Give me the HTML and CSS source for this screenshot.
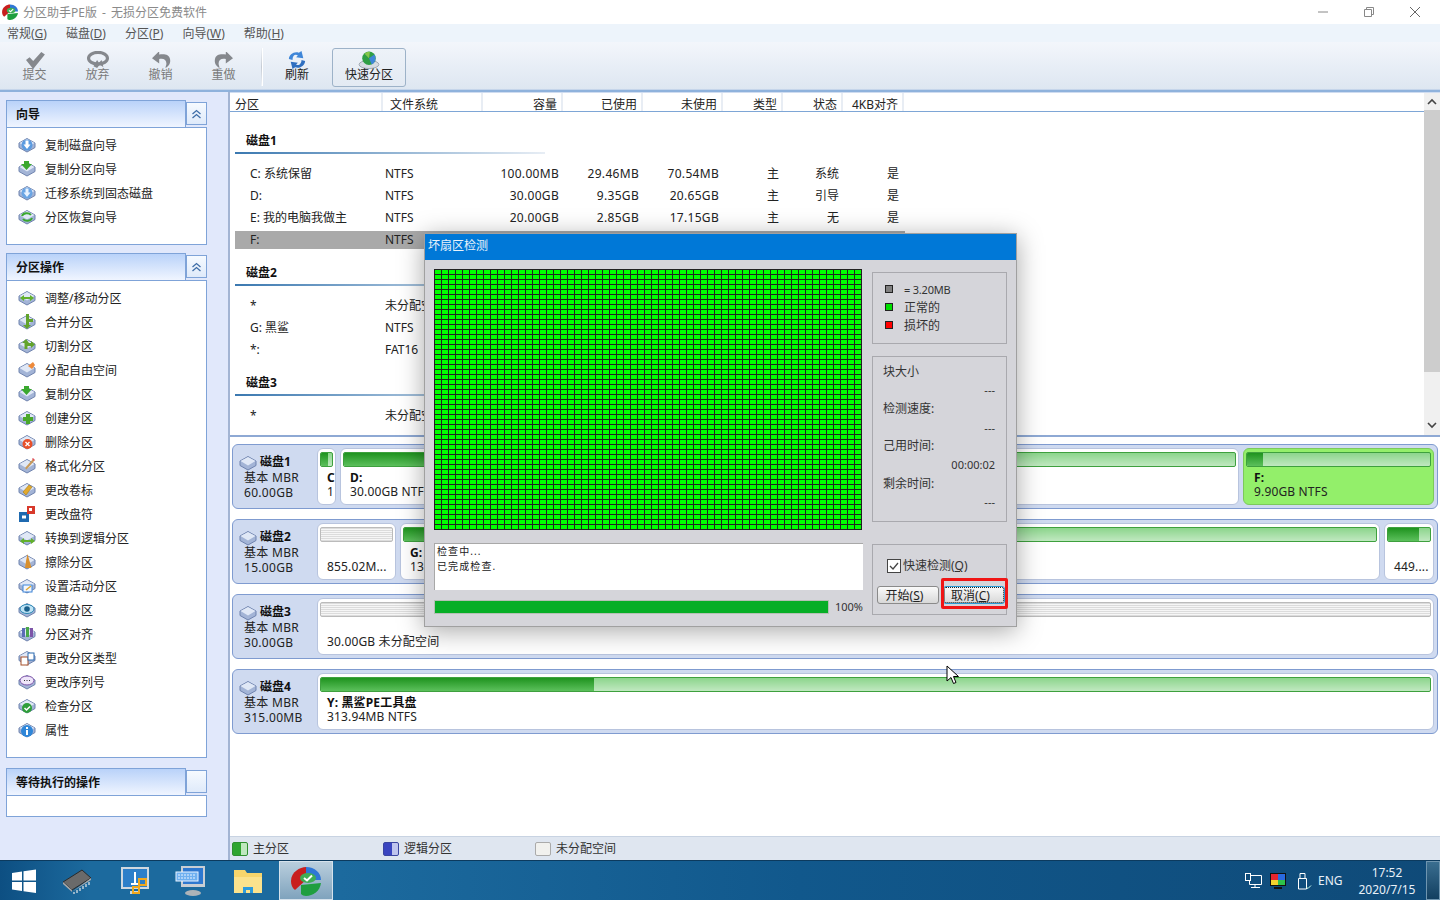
FILE: index.html
```html
<!DOCTYPE html>
<html lang="zh-CN">
<head>
<meta charset="utf-8">
<title>分区助手PE版</title>
<link rel="stylesheet" href="styles.css">
</head>
<body>
<svg class="defs" width="0" height="0">
  <symbol id="disk" viewBox="0 0 18 18">
    <path d="M1 7 L9 2.500 L17 7 L17 11.500 L9 16 L1 11.500Z" fill="#a3b4d6" stroke="#6f83ae" stroke-width="1"/>
    <path d="M1.500 7 L9 3 L16.500 7 L9 11.500Z" fill="#e0e8f6"/>
  </symbol>
  <symbol id="app" viewBox="0 0 34 34">
    <path d="M2 17 C2 8 11 3 17 3 L17 16 L6 26 C3 24 2 20 2 17Z" fill="#c81e1e"/>
    <path d="M17 3 C26 3 32 9 32 16 L17 16Z" fill="#2f77d6"/>
    <path d="M12 21 L32 19 C31 27 24 32 17 32 C15 32 13 31 12 30Z" fill="#1f9e3f"/>
    <ellipse cx="19" cy="14" rx="8" ry="5" fill="#3fae55"/>
    <path d="M15 14 l3 2.500 l5-5" fill="none" stroke="#fff" stroke-width="2"/>
  </symbol>
</svg>

<header class="titlebar">
  <svg class="title-icon" width="18" height="18"><use href="#app"/></svg>
  <span class="title-text">分区助手PE版 - 无损分区免费软件</span>
  <div class="winctl">
    <svg width="12" height="12" viewBox="0 0 12 12"><path d="M1 6h10" stroke="#888"/></svg>
    <svg width="12" height="12" viewBox="0 0 12 12"><path d="M1.500 3.500h7v7h-7zM3.500 3.500v-2h7v7h-2" fill="none" stroke="#888"/></svg>
    <svg width="12" height="12" viewBox="0 0 12 12"><path d="M1 1l10 10M11 1L1 11" stroke="#666"/></svg>
  </div>
</header>

<nav class="menubar">
  <span>常规(<u>G</u>)</span><span>磁盘(<u>D</u>)</span><span>分区(<u>P</u>)</span><span>向导(<u>W</u>)</span><span>帮助(<u>H</u>)</span>
</nav>

<div class="toolbar">
  <div class="tool off"><svg width="24" height="18" viewBox="0 0 24 20"><path d="M2 10l4-3 4 4 9-10 4 3-13 16z" fill="#85888d"/></svg><span>提交</span></div>
  <div class="tool off"><svg width="26" height="18" viewBox="0 0 26 20"><ellipse cx="13" cy="8" rx="10.500" ry="6.500" fill="none" stroke="#85888d" stroke-width="3.500"/><path d="M8 17l4-7 2 3 3-3 2 8-4-3-3 4z" fill="#85888d"/></svg><span>放弃</span></div>
  <div class="tool off"><svg width="24" height="18" viewBox="0 0 24 20"><path d="M9 1L2 8l8 6V9c5-1 8 1 8 5 0 2-1 3-1 5 4-2 6-6 5-10-1-5-6-6-12-5V1z" fill="#85888d"/></svg><span>撤销</span></div>
  <div class="tool off"><svg width="24" height="18" viewBox="0 0 24 20"><path d="M15 1l7 7-8 6V9C9 8 6 10 6 14c0 2 1 3 1 5-4-2-6-6-5-10 1-5 6-6 12-5V1z" fill="#85888d"/></svg><span>重做</span></div>
  <div class="tool-sep"></div>
  <div class="tool refresh"><svg width="20" height="18" viewBox="0 0 20 20"><path d="M1 9C1 4 7 0 12 2l3-2 2 8-8-1 2-2C8 3 5 5 5 10z" fill="#3f86d8"/><path d="M19 11c0 5-6 9-11 7l-3 2-2-8 8 1-2 2c3 2 6-1 6-5z" fill="#2f6fc0"/></svg><span>刷新</span></div>
  <div class="tool quick"><svg width="26" height="18" viewBox="0 0 26 20"><ellipse cx="13" cy="15" rx="11" ry="4.500" fill="#d6dbe2" stroke="#9aa3ad"/><circle cx="13" cy="8" r="7.500" fill="#2f9e44"/><path d="M13 8l6-4a7.500 7.500 0 0 1-3 11z" fill="#3f86d8"/><path d="M13 8L8 3a7.500 7.500 0 0 1 6-2z" fill="#86c64a"/></svg><span>快速分区</span></div>
</div>

<main class="main">
  <aside class="sidebar">
    <section class="panel">
      <div class="panel-head"><h2>向导</h2><button class="collapse"><svg width="11" height="10" viewBox="0 0 11 10"><path d="M1.500 5l4-3.500 4 3.500M1.500 9l4-3.500 4 3.500" fill="none" stroke="#3f6ea8" stroke-width="1.300"/></svg></button></div>
      <ul class="panel-list wizard">
        <li><svg width="18" height="18"><use href="#disk"/><circle cx="9" cy="9" r="5.500" fill="#5b9be0"/><path d="M7.500 4.500h3v4h2L9 13 5.500 8.500h2z" fill="#fff"/></svg>复制磁盘向导</li>
        <li><svg width="18" height="18"><use href="#disk"/><path d="M6 1h5v3h3l-5.500 6L3 4h3z" fill="#3aa82e"/></svg>复制分区向导</li>
        <li><svg width="18" height="18"><use href="#disk"/><circle cx="9" cy="9" r="5.500" fill="#6aa5e4"/><path d="M7.500 4.500h3v4h2L9 13 5.500 8.500h2z" fill="#e8f2ff"/></svg>迁移系统到固态磁盘</li>
        <li><svg width="18" height="18"><use href="#disk"/><path d="M4 8a5 4 0 0 1 9-1M14 10a5 4 0 0 1-9 1" fill="none" stroke="#3aa82e" stroke-width="2"/></svg>分区恢复向导</li>
      </ul>
    </section>

    <section class="panel ops">
      <div class="panel-head"><h2>分区操作</h2><button class="collapse"><svg width="11" height="10" viewBox="0 0 11 10"><path d="M1.500 5l4-3.500 4 3.500M1.500 9l4-3.500 4 3.500" fill="none" stroke="#3f6ea8" stroke-width="1.300"/></svg></button></div>
      <ul class="panel-list">
        <li><svg width="18" height="18"><use href="#disk"/><path d="M2 9l4-3v2h6V6l4 3-4 3v-2H6v2z" fill="#62b02c"/></svg>调整/移动分区</li>
        <li><svg width="18" height="18"><use href="#disk"/><path d="M8 1h3v5h4v3h-4v3h2l-4 4-4-4h3z" fill="#62a32c"/></svg>合并分区</li>
        <li><svg width="18" height="18"><use href="#disk"/><path d="M8 2L4 6h2.500v6h3V9H13v2l4-3.500L13 4v2H9.500V6H11z" fill="#62a32c"/></svg>切割分区</li>
        <li><svg width="18" height="18"><use href="#disk"/><path d="M10 5l5-4 2 3-3 4z" fill="#ee8a3a"/></svg>分配自由空间</li>
        <li><svg width="18" height="18"><use href="#disk"/><path d="M6 1h5v3h3l-5.500 6L3 4h3z" fill="#3aa82e"/></svg>复制分区</li>
        <li><svg width="18" height="18"><use href="#disk"/><path d="M8 5h4v3h3v4h-3v3H8v-3H5V8h3z" fill="#4aa82a"/></svg>创建分区</li>
        <li><svg width="18" height="18"><use href="#disk"/><circle cx="9.500" cy="11" r="5" fill="#e8502a"/><path d="M7.500 9l4 4m0-4l-4 4" stroke="#fff" stroke-width="1.300"/></svg>删除分区</li>
        <li><svg width="18" height="18"><use href="#disk"/><path d="M7 11l8-9 1.500 1.500-8 9z" fill="#c89a5a"/><path d="M14.500 1.500l2 2" stroke="#e0505a" stroke-width="1.500"/></svg>格式化分区</li>
        <li><svg width="18" height="18"><use href="#disk"/><path d="M5 11l6-7 3 2-6 8z" fill="#e2a92e" stroke="#a87a10" stroke-width=".6"/></svg>更改卷标</li>
        <li><svg width="18" height="18"><rect x="1" y="7" width="10" height="10" fill="#1f6ab0"/><rect x="9" y="1" width="8" height="8" fill="#d8392b"/><rect x="11" y="3" width="3" height="3" fill="#fff"/><rect x="4" y="10.500" width="4" height="3" fill="#fff"/></svg>更改盘符</li>
        <li><svg width="18" height="18"><use href="#disk"/><path d="M2 12l4-3v2h7V9l4 3-4 3v-2H6v2z" fill="#62b02c"/></svg>转换到逻辑分区</li>
        <li><svg width="18" height="18"><use href="#disk"/><path d="M9.500 1l2 7 2 7H7l1-7z" fill="#d9902e"/></svg>擦除分区</li>
        <li><svg width="18" height="18"><use href="#disk"/><rect x="5" y="8" width="9" height="7" fill="#f2f6ff" stroke="#3f86d8"/><path d="M8 13l5-4" stroke="#e2a92e" stroke-width="1.500"/></svg>设置活动分区</li>
        <li><svg width="18" height="18"><use href="#disk"/><ellipse cx="9" cy="8" rx="7" ry="4.500" fill="#bfe3f4" stroke="#2a86b5"/><circle cx="9" cy="8" r="2.800" fill="#1a5f8a"/></svg>隐藏分区</li>
        <li><svg width="18" height="18"><use href="#disk"/><rect x="4" y="3" width="3" height="9" fill="#5b6cb5"/><rect x="8" y="2" width="3" height="10" fill="#4aa84a"/><rect x="12" y="3" width="3" height="9" fill="#7d55a8"/></svg>分区对齐</li>
        <li><svg width="18" height="18"><use href="#disk"/><rect x="3" y="8" width="7" height="8" fill="#fff" stroke="#a8502a"/><rect x="10" y="4" width="6" height="7" fill="#fff" stroke="#2a6ab0"/></svg>更改分区类型</li>
        <li><svg width="18" height="18"><use href="#disk"/><ellipse cx="9" cy="7.500" rx="7" ry="4.500" fill="#efe6fa" stroke="#7b52a8"/><path d="M6 7.500h1m1.500 0h1m1.500 0h1" stroke="#333"/></svg>更改序列号</li>
        <li><svg width="18" height="18"><use href="#disk"/><circle cx="9" cy="11" r="5" fill="#2f9e3a"/><path d="M6.500 11l2 2 3.500-3.500" fill="none" stroke="#fff" stroke-width="1.500"/></svg>检查分区</li>
        <li><svg width="18" height="18"><use href="#disk"/><circle cx="9" cy="10" r="6" fill="#2f86d8"/><rect x="8" y="9" width="2" height="5" fill="#fff"/><rect x="8" y="6" width="2" height="2" fill="#fff"/></svg>属性</li>
      </ul>
    </section>

    <section class="panel pending">
      <div class="panel-head"><h2>等待执行的操作</h2><button class="collapse"></button></div>
      <div class="pending-body"></div>
    </section>
  </aside>

  <div class="content">
    <div class="table-area">
      <div class="table-main">
        <div class="thead">
          <span class="l">分区</span><span class="l fs">文件系统</span><span>容量</span><span>已使用</span><span>未使用</span><span>类型</span><span>状态</span><span>4KB对齐</span>
        </div>
        <h3 class="group">磁盘1</h3>
        <div class="row"><span>C: 系统保留</span><span>NTFS</span><span>100.00MB</span><span>29.46MB</span><span>70.54MB</span><span>主</span><span>系统</span><span>是</span></div>
        <div class="row"><span>D:</span><span>NTFS</span><span>30.00GB</span><span>9.35GB</span><span>20.65GB</span><span>主</span><span>引导</span><span>是</span></div>
        <div class="row"><span>E: 我的电脑我做主</span><span>NTFS</span><span>20.00GB</span><span>2.85GB</span><span>17.15GB</span><span>主</span><span>无</span><span>是</span></div>
        <div class="row sel"><span>F:</span><span>NTFS</span></div>
        <h3 class="group">磁盘2</h3>
        <div class="row"><span>*</span><span>未分配空间</span></div>
        <div class="row"><span>G: 黑鲨</span><span>NTFS</span></div>
        <div class="row"><span>*:</span><span>FAT16</span></div>
        <h3 class="group">磁盘3</h3>
        <div class="row"><span>*</span><span>未分配空间</span></div>
      </div>
      <div class="scrollbar">
        <svg width="16" height="16" viewBox="0 0 16 16"><path d="M4 10l4-4 4 4" fill="none" stroke="#444" stroke-width="1.600"/></svg>
        <div class="thumb-track"><div class="thumb"></div></div>
        <svg width="16" height="16" viewBox="0 0 16 16"><path d="M4 6l4 4 4-4" fill="none" stroke="#444" stroke-width="1.600"/></svg>
      </div>
    </div>

    <div class="diskmap">
      <div class="disk">
        <div class="dinfo"><div class="dname"><svg width="18" height="18"><use href="#disk"/></svg><b>磁盘1</b></div><div>基本 MBR</div><div>60.00GB</div></div>
        <div class="part w19"><div class="bar"><i class="used" style="width:60%"></i></div><div class="pname">C</div><div>1</div></div>
        <div class="part w300"><div class="bar"><i class="used" style="width:31%"></i></div><div class="pname">D:</div><div>30.00GB NTFS</div></div>
        <div class="part grow"><div class="bar"><i class="used" style="width:14%"></i></div><div class="pname">E:</div><div>20.00GB NTFS</div></div>
        <div class="part w191 active"><div class="bar"><i class="used" style="width:9%"></i></div><div class="pname">F:</div><div>9.90GB NTFS</div></div>
      </div>
      <div class="disk">
        <div class="dinfo"><div class="dname"><svg width="18" height="18"><use href="#disk"/></svg><b>磁盘2</b></div><div>基本 MBR</div><div>15.00GB</div></div>
        <div class="part w79"><div class="bar free"></div><div class="pname"></div><div>855.02M...</div></div>
        <div class="part grow"><div class="bar"><i class="used" style="width:3%"></i></div><div class="pname">G:</div><div>13.</div></div>
        <div class="part w50"><div class="bar"><i class="used" style="width:74%"></i></div><div class="pname"></div><div>449....</div></div>
      </div>
      <div class="disk">
        <div class="dinfo"><div class="dname"><svg width="18" height="18"><use href="#disk"/></svg><b>磁盘3</b></div><div>基本 MBR</div><div>30.00GB</div></div>
        <div class="part grow"><div class="bar free"></div><div class="pname"></div><div>30.00GB 未分配空间</div></div>
      </div>
      <div class="disk">
        <div class="dinfo"><div class="dname"><svg width="18" height="18"><use href="#disk"/></svg><b>磁盘4</b></div><div>基本 MBR</div><div>315.00MB</div></div>
        <div class="part grow"><div class="bar"><i class="used" style="width:24.600%"></i></div><div class="pname">Y: 黑鲨PE工具盘</div><div>313.94MB NTFS</div></div>
      </div>
    </div>

    <footer class="legend">
      <span class="lg lg1"><i class="sw prim"></i>主分区</span>
      <span class="lg lg2"><i class="sw logi"></i>逻辑分区</span>
      <span class="lg"><i class="sw unal"></i>未分配空间</span>
    </footer>
  </div>
</main>

<footer class="taskbar">
  <div class="start"><svg width="26" height="26" viewBox="0 0 26 26"><path d="M1 5l10-1.500V12.500H1zM12.500 3.300L25 1.500V12.500H12.500zM1 14h10v9L1 21.500zM12.500 14H25v11l-12.500-1.800z" fill="#fff"/></svg></div>
  <div class="tb-icon"><svg width="32" height="28" viewBox="0 0 32 28"><path d="M2 15L21 3l9 8-19 12z" fill="#6a6a6a" stroke="#2a2a2a"/><path d="M2 15l9 8 0 2L2 17zM11 25l19-12v-2" fill="#aaa"/><path d="M13 25v2m3-4v3m3-5v3m3-5v3m3-5v3m3-5v3" stroke="#e8e8e8" stroke-width="1.200"/></svg></div>
  <div class="tb-icon"><svg width="30" height="30" viewBox="0 0 30 30"><rect x="2" y="2" width="26" height="20" fill="#2d7fc9" stroke="#cfd8e0" stroke-width="2"/><path d="M15 6v12m-4 0h8" stroke="#fff" stroke-width="2"/><rect x="10" y="25" width="10" height="3" fill="#cfd8e0"/><rect x="19" y="13" width="7" height="6" fill="none" stroke="#f0a81e" stroke-width="2"/><rect x="13" y="21" width="6" height="6" fill="none" stroke="#f0a81e" stroke-width="2"/></svg></div>
  <div class="tb-icon"><svg width="32" height="32" viewBox="0 0 32 32"><path d="M6 1h24v21H6z" fill="#c9ced4"/><rect x="8" y="3" width="20" height="16" fill="#2e78d0"/><rect x="1" y="7" width="22" height="9" fill="#6fb0f0" stroke="#eaf3ff"/><path d="M3 10h18M3 13h18" stroke="#eaf3ff" stroke-dasharray="2 1"/><ellipse cx="18" cy="28" rx="8" ry="3" fill="#aeb3b8"/></svg></div>
  <div class="tb-icon"><svg width="30" height="26" viewBox="0 0 30 26"><path d="M1 2h11l2 3h15v20H1z" fill="#f7d56c"/><path d="M1 9h28v16H1z" fill="#fbe28d"/><path d="M10 19h10v6h-3v-3h-4v3h-3z" fill="#2d9bdc"/></svg></div>
  <div class="tb-active"><svg width="34" height="34"><use href="#app"/></svg></div>
  <div class="tray">
    <svg class="t1" width="18" height="16" viewBox="0 0 18 16"><path d="M4.500 2.500h12v9h-12zM10 11.500v2.500M6 14.500h9" fill="none" stroke="#fff"/><rect x=".5" y=".5" width="5" height="7" fill="#0f4a78" stroke="#fff"/></svg>
    <svg class="t2" width="18" height="18" viewBox="0 0 18 18"><rect x="1" y="1" width="16" height="13" fill="#111"/><path d="M2 2h7v6H2z" fill="#e6262e"/><path d="M9 2h7v6H9z" fill="#2a6ae0"/><path d="M2 8h7v5H2z" fill="#f2d22e"/><path d="M9 8h7v5H9z" fill="#2fc24a"/><rect x="5" y="15" width="8" height="2" fill="#111"/></svg>
    <svg class="t3" width="16" height="18" viewBox="0 0 16 18"><path d="M2.500 6.500h8V17h-8zM4 1.500h5v5H4z" fill="none" stroke="#fff"/><path d="M10 15l2 1.500 3-3" fill="none" stroke="#cfe"/></svg>
    <span class="lang">ENG</span>
    <div class="clock"><div>17:52</div><div>2020/7/15</div></div>
    <div class="showdesk"></div>
  </div>
</footer>

<div class="dialog">
  <div class="dlg-title">坏扇区检测</div>
  <div class="dlg-body">
    <div class="dlg-left">
      <div class="blocks"></div>
      <div class="log"><div>检查中...</div><div>已完成检查.</div></div>
      <div class="prog"><div class="prog-bar"></div><span>100%</span></div>
    </div>
    <div class="dlg-right">
      <div class="box legend-box">
        <div class="lrow lsmall"><i class="key gray"></i>= 3.20MB</div>
        <div class="lrow"><i class="key green"></i>正常的</div>
        <div class="lrow"><i class="key red"></i>损坏的</div>
      </div>
      <div class="box stats">
        <div class="st">块大小</div><div class="sv">---</div>
        <div class="st">检测速度:</div><div class="sv">---</div>
        <div class="st">己用时间:</div><div class="sv">00:00:02</div>
        <div class="st">剩余时间:</div><div class="sv">---</div>
      </div>
      <div class="box actions">
        <label class="chk"><svg width="14" height="14" viewBox="0 0 14 14"><rect x=".5" y=".5" width="13" height="13" fill="#fff" stroke="#444"/><path d="M3 7l3 3 5-6" fill="none" stroke="#444" stroke-width="1.300"/></svg><span>快速检测(<u>Q</u>)</span></label>
        <div class="btns">
          <button class="btn">开始(<u>S</u>)</button>
          <button class="btn focus">取消(<u>C</u>)</button>
        </div>
        <div class="redmark"></div>
      </div>
    </div>
  </div>
</div>

<svg class="cursor" width="14" height="20" viewBox="0 0 14 20"><path d="M1 1v15l4-3.500 2.500 6 2.500-1-2.500-6H12.500z" fill="#fff" stroke="#000"/></svg>
</body>
</html>
```

FILE: styles.css
```css
* { box-sizing: border-box; }
html, body { margin: 0; height: 900px; overflow: hidden; }
body {
  width: 1440px;
  display: flex;
  flex-direction: column;
  font: 12px/15px "Noto Sans", "Noto Sans CJK SC", sans-serif;
  color: #222;
  background: #fff;
  position: relative;
}
.defs { position: absolute; }
ul { list-style: none; margin: 0; padding: 0; }
h2, h3 { margin: 0; }

/* title bar */
.titlebar { height: 24px; display: flex; align-items: center; padding-left: 1px; background: #fff; flex: none; }
.title-icon { flex: none; }
.title-text { margin-left: 4px; color: #8a8a8a; word-spacing: 2px; }
.winctl { margin-left: auto; display: flex; gap: 34px; padding-right: 19px; }

/* menu */
.menubar { height: 18px; display: flex; flex: none; gap: 19px; padding-left: 7px; background: #edf4fb; color: #555; align-items: center; }

/* toolbar */
.toolbar {
  height: 50px; flex: none; display: flex; padding: 6px 0 0 3px;
  background: linear-gradient(#f3f6fb, #dde6f1);
  border-bottom: 2px solid #8fb2dc;
  box-shadow: inset 0 -1px 0 #c5d5ea;
}
.tool { width: 63px; display: flex; flex-direction: column; align-items: center; height: 39px; padding-top: 3px; }
.tool svg { display: block; flex: none; }
.tool span { line-height: 16px; margin-top: -2px; }
.tool.off { color: #7a7a7a; }
.tool-sep { width: 2px; height: 38px; margin: 0 8px 0 6px; background: linear-gradient(#eef2f7, #c6ccd4, #eef2f7); border-right: 1px solid #fff; }
.tool.refresh { width: 52px; }
.tool.quick { width: 74px; margin-left: 9px; border: 1px solid #9db2c8; border-radius: 3px; background: linear-gradient(#edf2f8, #e3eaf3); padding-top: 2px; }

/* main */
.main { flex: 1; display: flex; min-height: 0; }
.sidebar {
  width: 228px; flex: none; background: #e1e8fb; padding: 8px 21px 0 6px;
  display: flex; flex-direction: column; gap: 8px;
}
.panel { border: 1px solid #7fa3d8; background: #fff; border-top: 0; height: 145px; display: flex; flex-direction: column; }
.panel.ops { height: 505px; }
.panel.pending { height: 49px; margin-top: 2px; }
.panel-head {
  height: 28px; flex: none; display: flex; margin: 0 -1px; position: relative;
  border-bottom: 1px solid #7fa3d8; background: #e1e8fb;
}
.panel-head h2 {
  width: 180px; font-size: 12px; line-height: 27px; padding-left: 9px; color: #111;
  background: linear-gradient(#b9d2f9, #f0f5ff);
  border: 1px solid #7fa3d8; border-bottom: 0; border-left-color: #7fa3d8;
}
.collapse {
  width: 21px; height: 23px; margin-top: 2px; padding: 0; border: 1px solid #7fa3d8;
  background: linear-gradient(#f6faff, #dfeafa); display: flex; align-items: center; justify-content: center;
}
.panel-list { padding-top: 5px; }
.panel-list li { height: 24px; display: flex; align-items: center; padding-left: 11px; gap: 9px; }
.panel-list li svg { flex: none; }
.pending-body { flex: 1; }

/* content */
.content { flex: 1; min-width: 0; display: flex; flex-direction: column; border-left: 2px solid #a3b4d3; }
.table-area { height: 345px; display: flex; flex: none; border-top: 1px solid #cfdcf0; border-bottom: 2px solid #8ea9d4; }
.table-main { flex: 1; min-width: 0; }
.thead {
  height: 19px; display: grid; grid-template-columns: 153px 100px 80px 80px 80px 60px 60px 61px;
  border-bottom: 1px solid #7ea6d6; overflow: hidden;
}
.thead span { text-align: right; padding: 4px 4px 0 0; border-right: 2px solid #e8edf4; color: #222; white-space: nowrap; }
.thead .l { text-align: left; padding-left: 5px; }
.thead .fs { padding-left: 7px; }
.group {
  margin: 13px 0 11px 5px; width: 310px; height: 24px; font-size: 12px; line-height: 22px; padding-left: 11px; color: #111;
  border-bottom: 2px solid; border-image: linear-gradient(90deg, #3a78b0, #e8eef5) 1;
}
.group:first-of-type { margin-top: 18px; }
.row {
  margin: 0 0 4px 5px; width: 670px; height: 18px; line-height: 18px;
  display: grid; grid-template-columns: 148px 100px 80px 80px 80px 60px 60px 62px;
}
.row span { text-align: right; padding-right: 4px; white-space: nowrap; }
.row span:nth-child(1), .row span:nth-child(2) { text-align: left; padding-left: 2px; }
.row span:nth-child(1) { padding-left: 15px; }
.row span:nth-child(3), .row span:nth-child(4), .row span:nth-child(5) { letter-spacing: .3px; }
.row span:nth-child(8) { padding-right: 6px; }
.row.sel { background: #a9a9a9; }
.scrollbar { width: 16px; background: #f0f0f0; display: flex; flex-direction: column; flex: none; padding: 1px 0 2px; }
.scrollbar svg { display: block; flex: none; }
.thumb-track { flex: 1; }
.thumb { height: 262px; background: #cdcdcd; }

/* disk map */
.diskmap { flex: 1; padding: 7px 0 0 2px; display: flex; flex-direction: column; gap: 10px; }
.disk {
  width: 1206px; height: 65px; flex: none; display: flex; gap: 4px; padding: 3px 3px 3px 0;
  background: #cfdaf0; border: 1px solid #7f9bd0; border-radius: 6px;
}
.dinfo { width: 81px; flex: none; padding: 7px 0 0 11px; letter-spacing: .3px; margin-right: -1px; line-height: 14.500px; }
.dname { display: flex; align-items: center; gap: 3px; height: 15px; margin: 0 0 1px -5px; letter-spacing: 0; }
.dname svg { flex: none; }
.dname b { color: #111; }
.part {
  border: 1px solid #b8c4de; border-radius: 6px; background: #fff; padding: 3px 2px 0 2px; overflow: hidden;
  white-space: nowrap; flex: none; letter-spacing: .15px; line-height: 14px;
}
.part > div:not(.bar) { padding-left: 7px; }
.part.active > div:not(.bar) { padding-left: 8px; }
.part .pname { height: 14px; font-weight: 700; color: #111; margin-top: 4px; }
.part.grow { flex: 1; min-width: 0; }
.w19 { width: 19px; }
.w300 { width: 299px; }
.w79 { width: 79px; }
.w50 { width: 50px; }
.w191 { width: 191px; }
.part.active { background: #93ef6a; border-color: #7cc95b; }
.bar {
  height: 15px; border: 1px solid #3ea03e; border-radius: 2px;
  background: linear-gradient(#8cd58c, #c0e8c0); overflow: hidden;
}
.bar .used { display: block; height: 100%; background: linear-gradient(#1f931f, #5cc05c); }
.bar.free { border-color: #bbb; background: repeating-linear-gradient(0deg, #dcdcdc 0 1px, #f6f6f6 1px 2px); }

/* legend */
.legend { height: 24px; flex: none; display: flex; align-items: center; background: #dfe6f0; border-top: 1px solid #c8d3e2; color: #333; padding-left: 2px; }
.lg { display: flex; align-items: center; gap: 5px; }
.lg1 { width: 151px; }
.lg2 { width: 152px; }
.sw { width: 16px; height: 14px; border-radius: 2px; border: 1px solid #777; display: block; }
.sw.prim { background: linear-gradient(90deg, #2fa52f 55%, #bfe8bf 55%); border-color: #2f8f2f; }
.sw.logi { background: linear-gradient(90deg, #3a45c0 55%, #bfc5ee 55%); border-color: #3a45a0; }
.sw.unal { background: #f1f1ee; border-color: #aaa; }

/* taskbar */
.taskbar {
  height: 40px; flex: none; display: flex; align-items: center; color: #e8f0f8;
  background: linear-gradient(90deg, #0d4f82 0, #1c6a9e 90px, #1c6a9e 340px, #11588c 800px, #0f4a78 1440px);
  border-top: 1px solid #0c3a5e;
}
.start { width: 48px; display: flex; justify-content: center; }
.tb-icon { width: 57px; display: flex; justify-content: center; }
.tb-icon:nth-child(3) { transform: translateX(1px); }
.tb-active {
  width: 54px; height: 39px; margin-left: 3px; display: flex; align-items: center; justify-content: center;
  background: linear-gradient(#b9cedd, #7fa3bd); border: 1px solid #d5e2ec;
}
.tray { margin-left: auto; display: flex; align-items: center; height: 100%; }
.tray .t1 { margin-right: 6px; }
.tray .t2 { margin-right: 9px; }
.tray .t3 { margin-right: 6px; }
.lang { width: 39px; color: #e8f0f8; font-size: 12px; }
.clock { width: 60px; text-align: center; line-height: 17px; color: #e8f0f8; }
.showdesk { width: 14px; height: 39px; margin-left: 9px; background: linear-gradient(#3a6e90, #123f60); border: 1px solid #6e95b0; }

/* dialog */
.dialog {
  position: absolute; left: 424px; top: 233px; width: 593px; height: 394px;
  background: #d5d5da; border: 1px solid #a0a0a0; box-shadow: 0 4px 24px rgba(0, 0, 0, .35);
  display: flex; flex-direction: column;
}
.dlg-title { height: 26px; flex: none; background: #0078d7; color: #e9f3fb; line-height: 23px; padding-left: 3px; }
.dlg-body { flex: 1; display: flex; padding: 9px 9px 0 9px; gap: 9px; }
.dlg-left { width: 429px; flex: none; }
.blocks {
  width: 428px; height: 261px;
  background-color: #00ff00;
  background-image: linear-gradient(90deg, #222 1px, transparent 1px), linear-gradient(#222 1px, transparent 1px);
  background-size: 7px 5px;
}
.log {
  height: 47px; margin-top: 13px; background: #fff; border: solid #a8a8a8; border-width: 1px 0 0 1px;
  padding: 0 0 0 2px; font-size: 10px; line-height: 15px; letter-spacing: 1.100px; color: #222;
}
.prog { display: flex; align-items: center; margin-top: 9px; gap: 6px; }
.prog-bar { width: 395px; height: 14px; background: #06ae26; border: 1px solid #b5c0b5; }
.prog span { font-size: 11px; white-space: nowrap; color: #333; }
.dlg-right { width: 135px; flex: none; display: flex; flex-direction: column; }
.box { border: 1px solid #a9a9ae; padding: 0 10px; }
.legend-box { height: 72px; margin-top: 3px; padding: 7px 0 0 12px; }
.lrow { display: flex; align-items: center; gap: 11px; height: 18px; color: #333; }
.lsmall { font-size: 11px; letter-spacing: -.2px; }
.key { width: 8px; height: 8px; border: 1px solid #222; display: block; }
.key.gray { background: #808080; }
.key.green { background: #00e000; }
.key.red { background: #f00; }
.stats { height: 166px; margin-top: 12px; padding: 5.500px 11px 0 10px; color: #333; }
.st { height: 18.700px; line-height: 18.700px; }
.sv { height: 18.700px; line-height: 18.700px; text-align: right; font-size: 11px; }
.actions { height: 71px; margin-top: 22px; padding: 13px 0 0 14px; position: relative; color: #333; }
.chk { display: flex; align-items: center; gap: 2px; }
.btns { display: flex; gap: 4px; margin: 13px 0 0 -10px; }
.btn {
  width: 62px; height: 18px; padding: 0 7px 0 0; font: 12px/15px "Noto Sans", "Noto Sans CJK SC", sans-serif; color: #222;
  background: linear-gradient(#fafafa, #d8d8d8); border: 1px solid #8a8a8a; border-radius: 3px;
}
.btn.focus { border-color: #2a9ad6; outline: 1px dotted #222; outline-offset: -2px; }
.redmark { position: absolute; left: 68px; top: 33px; width: 67px; height: 31px; border: 3px solid #f01515; border-radius: 2px; }

.cursor { position: absolute; left: 946px; top: 665px; }
```
